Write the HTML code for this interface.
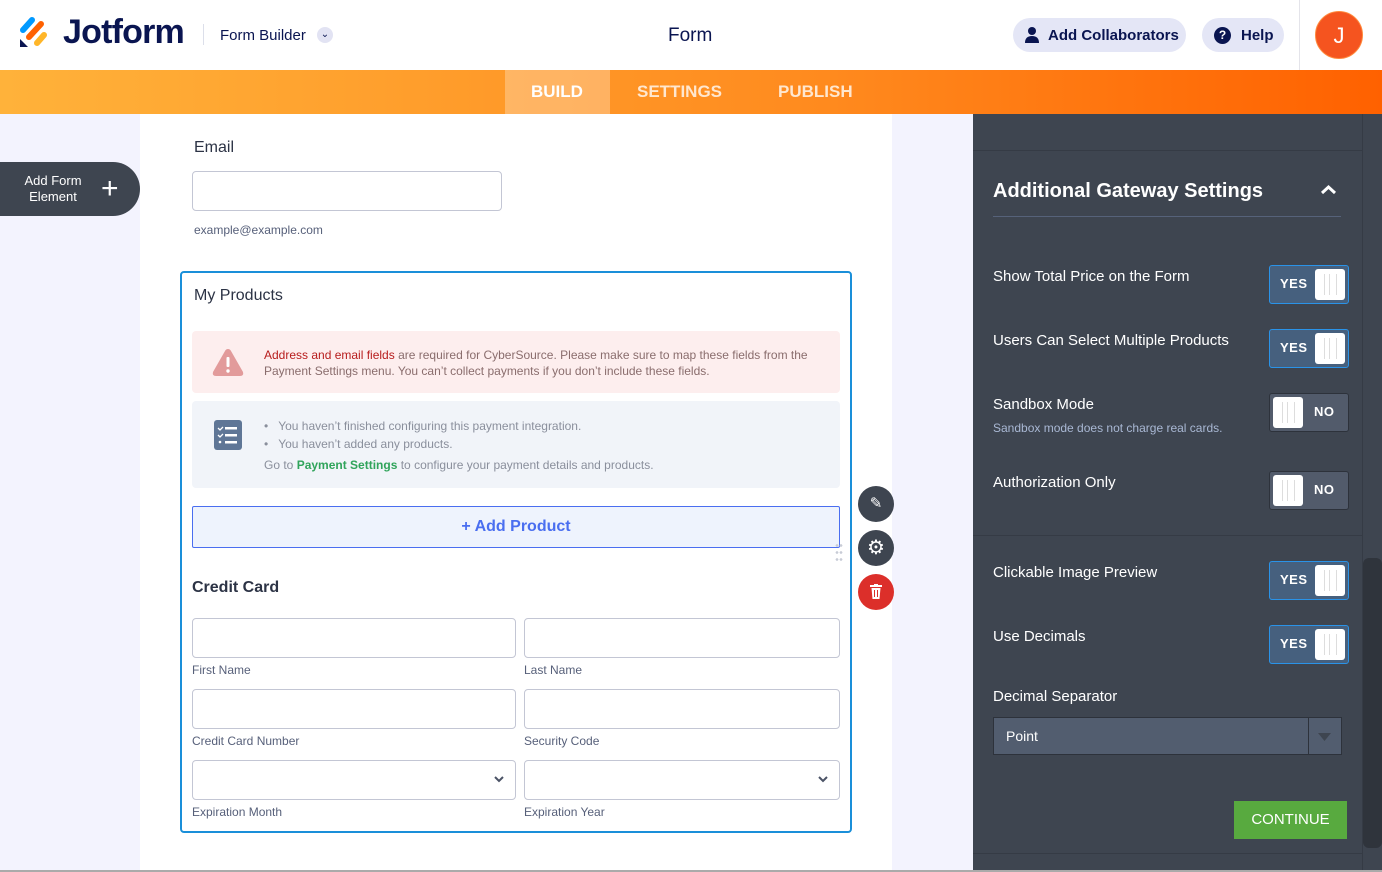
<!DOCTYPE html>
<html><head><meta charset="utf-8"><style>
*{box-sizing:border-box;margin:0;padding:0}
body{width:1382px;height:872px;overflow:hidden;font-family:"Liberation Sans",sans-serif;background:#f3f3fe;position:relative}
.abs{position:absolute}
.hdr{left:0;top:0;width:1382px;height:70px;background:#fff}
.nav{left:0;top:70px;width:1382px;height:44px;background:linear-gradient(90deg,#ffb23a,#ff8a1e 60%,#ff6100)}
.nav span{position:absolute;top:12px;color:#ffe7cf;font-size:17px;font-weight:bold}
.pill{background:#e4e6f6;border-radius:18px;height:34px;top:18px;color:#0a1551;font-weight:bold;font-size:15px;display:flex;align-items:center}
.canvas{left:140px;top:114px;width:752px;height:758px;background:#fff}
.inp{position:absolute;border:1px solid #c3c6d4;border-radius:4px;background:#fff;height:40px}
.lbl{position:absolute;font-size:12px;color:#57607a}
.rp{left:973px;top:114px;width:409px;height:758px;background:#3e4550}
.t{position:absolute;color:#fff;font-size:15px}
.tg{position:absolute;left:1269px;width:80px;height:39px;border-radius:3px}
.yes{background:#46607e;border:1px solid #2a93e8}
.no{background:#525b6b;border:1px solid #2d323b}
.tg b{position:absolute;top:10px;color:#fff;font-size:13px;letter-spacing:.5px}
.knob{position:absolute;top:3px;width:30px;height:31px;background:#fff;border-radius:3px}
.knob:before{content:"";position:absolute;left:9px;top:5px;width:11px;height:21px;border-left:1px solid #ddd;border-right:1px solid #ddd}
.knob:after{content:"";position:absolute;left:14px;top:5px;width:1px;height:21px;background:#ddd}
.yes .knob{right:3px}.yes b{left:10px}
.no .knob{left:3px}.no b{left:44px}
</style></head><body>
<div class="abs hdr"></div>
<svg class="abs" style="left:19px;top:17px" width="30" height="30" viewBox="0 0 30 30">
<line x1="4" y1="13" x2="13" y2="3" stroke="#0099ff" stroke-width="6" stroke-linecap="round"/>
<line x1="10" y1="20" x2="22" y2="7" stroke="#ff6100" stroke-width="6" stroke-linecap="round"/>
<line x1="18" y1="26" x2="25" y2="18" stroke="#ffb629" stroke-width="6" stroke-linecap="round"/>
<path d="M1 22 L1 30 L9 30 Z" fill="#0a1551"/>
</svg>
<div class="abs" style="left:63px;top:13px;font-size:34px;font-weight:bold;color:#0a1551;letter-spacing:-.8px">Jotform</div>
<div class="abs" style="left:203px;top:24px;width:1px;height:21px;background:#dcdfea"></div>
<div class="abs" style="left:220px;top:27px;font-size:15px;color:#0a1551">Form Builder</div>
<div class="abs" style="left:317px;top:27px;width:16px;height:16px;border-radius:50%;background:#e2e3f3;color:#0a1551;font-size:10px;text-align:center;line-height:16px">&#8964;</div>
<div class="abs" style="left:668px;top:25px;font-size:19px;color:#0a1551">Form</div>
<div class="abs pill" style="left:1013px;width:173px;padding-left:12px"><svg width="14" height="16" viewBox="0 0 14 16"><circle cx="7" cy="4" r="4" fill="#0a1551"/><path d="M0 16 Q0 9 7 9 Q14 9 14 16Z" fill="#0a1551"/></svg><span style="margin-left:9px">Add Collaborators</span></div>
<div class="abs pill" style="left:1202px;width:82px;padding-left:12px"><span style="width:17px;height:17px;border-radius:50%;background:#0a1551;color:#fff;font-size:12px;text-align:center;line-height:17px">?</span><span style="margin-left:10px">Help</span></div>
<div class="abs" style="left:1299px;top:0;width:1px;height:70px;background:#e4e4ea"></div>
<div class="abs" style="left:1315px;top:11px;width:48px;height:48px;border-radius:50%;background:#f5541f;color:#fff;font-size:22px;text-align:center;line-height:48px;border:1px solid #ff8a3d">J</div>
<div class="abs nav">
<div style="position:absolute;left:505px;top:0;width:105px;height:44px;background:rgba(255,255,255,.28)"></div>
<span style="left:531px;color:#fff">BUILD</span><span style="left:637px">SETTINGS</span><span style="left:778px">PUBLISH</span></div>
<div class="abs" style="left:0;top:162px;width:140px;height:54px;background:#3e4550;border-radius:0 27px 27px 0"></div>
<div class="abs" style="left:18px;top:173px;width:70px;color:#fff;font-size:13px;text-align:center;line-height:16px">Add Form Element</div>
<div class="abs" style="left:101px;top:176px;color:#fff;font-size:30px;line-height:26px;font-weight:300">+</div>
<div class="abs canvas"></div>
<div class="abs" style="left:194px;top:139px;font-size:16px;color:#2c3345">Email</div>
<div class="inp" style="left:192px;top:171px;width:310px"></div>
<div class="lbl" style="left:194px;top:223px">example@example.com</div>
<div class="abs" style="left:180px;top:271px;width:672px;height:562px;border:2px solid #1a8fd9;border-radius:4px"></div>
<div class="abs" style="left:194px;top:287px;font-size:16px;color:#2c3345">My Products</div>
<div class="abs" style="left:192px;top:331px;width:648px;height:62px;background:#fdeeee;border-radius:4px"></div>
<svg class="abs" style="left:211px;top:347px" width="34" height="30" viewBox="0 0 34 30"><path d="M17 2 Q19 2 20 4 L32 25 Q33 29 29 29 L5 29 Q1 29 2 25 L14 4 Q15 2 17 2Z" fill="#e29b9b"/><rect x="15.5" y="10" width="3" height="10" rx="1" fill="#fff"/><circle cx="17" cy="24" r="1.7" fill="#fff"/></svg>
<div class="abs" style="left:264px;top:347px;width:565px;font-size:12px;line-height:16px;color:#8a6d6d"><span style="color:#b71c1c">Address and email fields</span> are required for CyberSource. Please make sure to map these fields from the Payment Settings menu. You can’t collect payments if you don’t include these fields.</div>
<div class="abs" style="left:192px;top:401px;width:648px;height:87px;background:#f1f4f9;border-radius:4px"></div>
<svg class="abs" style="left:214px;top:420px" width="28" height="30" viewBox="0 0 28 30"><rect width="28" height="30" rx="3" fill="#5f7696"/><path d="M4 8l2 2 3-3M4 15l2 2 3-3" stroke="#fff" stroke-width="1.3" fill="none"/><rect x="11" y="7" width="12" height="2.5" fill="#fff"/><rect x="11" y="14" width="12" height="2.5" fill="#fff"/><circle cx="6" cy="22" r="1.3" fill="#fff"/><rect x="11" y="21" width="12" height="2.5" fill="#fff"/></svg>
<div class="abs" style="left:264px;top:417px;font-size:12px;line-height:18px;color:#8a8f9c">•&nbsp;&nbsp;&nbsp;You haven’t finished configuring this payment integration.<br>•&nbsp;&nbsp;&nbsp;You haven’t added any products.</div>
<div class="abs" style="left:264px;top:458px;font-size:12px;color:#8a8f9c">Go to <span style="color:#30a45b;font-weight:bold">Payment Settings</span> to configure your payment details and products.</div>
<div class="abs" style="left:192px;top:506px;width:648px;height:42px;background:#eef3fd;border:1px solid #4a6ef0;border-radius:2px;text-align:center;line-height:40px;color:#4a6ef0;font-size:16px;font-weight:bold">+ Add Product</div>
<div class="abs" style="left:192px;top:579px;font-size:16px;font-weight:bold;color:#2c3345">Credit Card</div>
<div class="inp" style="left:192px;top:618px;width:324px"></div><div class="inp" style="left:524px;top:618px;width:316px"></div>
<div class="lbl" style="left:192px;top:663px">First Name</div><div class="lbl" style="left:524px;top:663px">Last Name</div>
<div class="inp" style="left:192px;top:689px;width:324px"></div><div class="inp" style="left:524px;top:689px;width:316px"></div>
<div class="lbl" style="left:192px;top:734px">Credit Card Number</div><div class="lbl" style="left:524px;top:734px">Security Code</div>
<div class="inp" style="left:192px;top:760px;width:324px"></div><div class="inp" style="left:524px;top:760px;width:316px"></div>
<svg class="abs" style="left:494px;top:776px" width="10" height="7"><path d="M1 1l4 4 4-4" stroke="#4b5366" stroke-width="2" fill="none"/></svg>
<svg class="abs" style="left:818px;top:776px" width="10" height="7"><path d="M1 1l4 4 4-4" stroke="#4b5366" stroke-width="2" fill="none"/></svg>
<div class="lbl" style="left:192px;top:805px">Expiration Month</div><div class="lbl" style="left:524px;top:805px">Expiration Year</div>
<div class="abs" style="left:835px;top:542px;width:8px;height:20px;background:radial-gradient(circle,#c8ccd6 1.2px,transparent 1.5px) 0 0/4px 7px"></div>
<div class="abs" style="left:858px;top:486px;width:36px;height:36px;border-radius:50%;background:#3e4550;color:#fff;text-align:center;line-height:36px;font-size:15px">✎</div>
<div class="abs" style="left:858px;top:530px;width:36px;height:36px;border-radius:50%;background:#3e4550;color:#fff;text-align:center;line-height:36px;font-size:20px">⚙</div>
<div class="abs" style="left:858px;top:574px;width:36px;height:36px;border-radius:50%;background:#dc2f2a"></div>
<svg class="abs" style="left:870px;top:584px" width="12" height="15" viewBox="0 0 12 15"><rect x="0" y="1" width="12" height="2" fill="#fff"/><rect x="4" y="0" width="4" height="2" fill="#fff"/><path d="M1.5 4h9l-1 11h-7z" fill="#fff"/><path d="M4.5 6v7M7.5 6v7" stroke="#dc2f2a"/></svg>
<div class="abs rp"></div>
<div class="abs" style="left:1362px;top:114px;width:1px;height:758px;background:#353b45"></div>
<div class="abs" style="left:1363px;top:558px;width:19px;height:290px;background:#2f343c;border-radius:6px"></div>
<div class="abs" style="left:973px;top:150px;width:389px;height:1px;background:#353b45"></div>
<div class="t" style="left:993px;top:180px;font-size:20px;font-weight:bold">Additional Gateway Settings</div>
<svg class="abs" style="left:1320px;top:184px" width="17" height="11"><path d="M2 9l6.5-6 6.5 6" stroke="#fff" stroke-width="3" fill="none"/></svg>
<div class="abs" style="left:993px;top:216px;width:348px;height:1px;background:#56627a"></div>
<div class="t" style="left:993px;top:268px">Show Total Price on the Form</div>
<div class="tg yes" style="top:265px"><b>YES</b><div class="knob"></div></div>
<div class="t" style="left:993px;top:332px">Users Can Select Multiple Products</div>
<div class="tg yes" style="top:329px"><b>YES</b><div class="knob"></div></div>
<div class="t" style="left:993px;top:396px">Sandbox Mode</div>
<div class="t" style="left:993px;top:421px;font-size:12px;color:#a9b8d4">Sandbox mode does not charge real cards.</div>
<div class="tg no" style="top:393px"><b>NO</b><div class="knob"></div></div>
<div class="t" style="left:993px;top:474px">Authorization Only</div>
<div class="tg no" style="top:471px"><b>NO</b><div class="knob"></div></div>
<div class="abs" style="left:973px;top:535px;width:389px;height:1px;background:#353b45"></div>
<div class="t" style="left:993px;top:564px">Clickable Image Preview</div>
<div class="tg yes" style="top:561px"><b>YES</b><div class="knob"></div></div>
<div class="t" style="left:993px;top:628px">Use Decimals</div>
<div class="tg yes" style="top:625px"><b>YES</b><div class="knob"></div></div>
<div class="t" style="left:993px;top:688px">Decimal Separator</div>
<div class="abs" style="left:993px;top:717px;width:349px;height:38px;background:#525d6f;border:1px solid #2d323b"></div>
<div class="abs" style="left:1308px;top:718px;width:1px;height:36px;background:#2d323b"></div>
<div class="t" style="left:1006px;top:728px;font-size:14px">Point</div>
<svg class="abs" style="left:1318px;top:733px" width="13" height="8"><path d="M0 0h13l-6.5 8z" fill="#3e4550"/></svg>
<div class="abs" style="left:1234px;top:801px;width:113px;height:38px;background:#58aa3f;color:#fff;text-align:center;line-height:38px;font-size:15px">CONTINUE</div>
<div class="abs" style="left:973px;top:853px;width:389px;height:1px;background:#353b45"></div>
<div class="abs" style="left:0;top:870px;width:1382px;height:2px;background:#aaa"></div>
</body></html>
